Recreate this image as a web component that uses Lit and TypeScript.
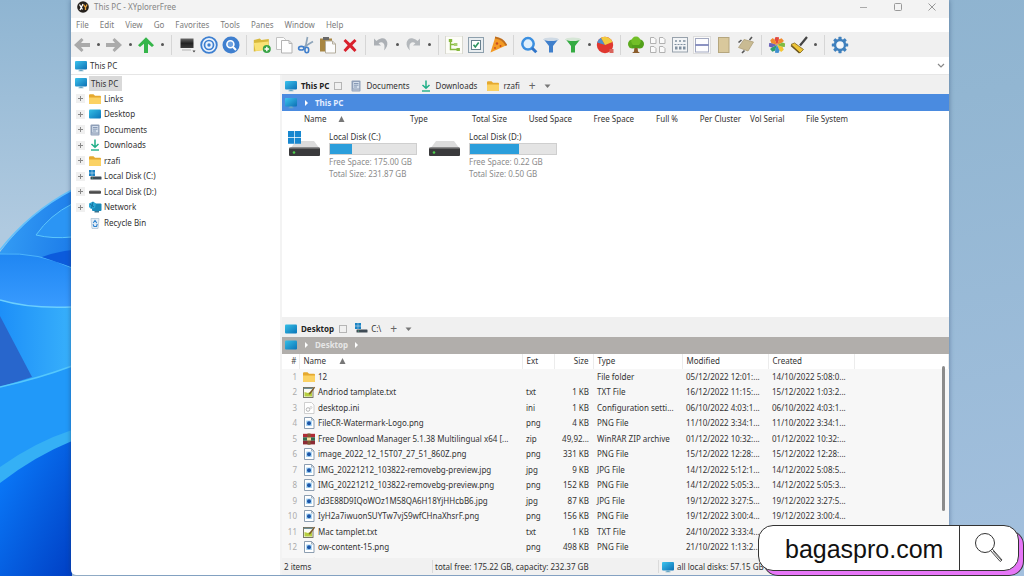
import { LitElement, html, svg, css } from "lit";
import { customElement } from "lit/decorators.js";

const icon = (body: unknown, w = 18, h = 18, vb = `0 0 ${w} ${h}`) =>
  html`<svg width=${w} height=${h} viewBox=${vb} aria-hidden="true">${body}</svg>`;

/* small file-system glyphs, 14 x 12 */
const small = {
  monitor: svg`<defs><linearGradient id="m" x1="0" y1="0" x2="1" y2="1"><stop offset="0" stop-color="#3cc4ee"/><stop offset="1" stop-color="#0c6fb4"/></linearGradient></defs><rect x="1" y="1" width="12" height="8.5" rx="1" fill="url(#m)"/><path d="M5.500 9.500h3v1h1v.8H4.500v-.8h1z" fill="#6aa6c4"/>`,
  desktop: svg`<defs><linearGradient id="d" x1="0" y1="0" x2="1" y2="1"><stop offset="0" stop-color="#35bfe6"/><stop offset="1" stop-color="#0b74b8"/></linearGradient></defs><rect x="1" y="1.500" width="12" height="9" rx="1" fill="url(#d)"/>`,
  folder: svg`<path d="M1 2.200q0-1 1-1h3.500l1.500 1.500h5q1 0 1 1V10q0 1-1 1H2q-1 0-1-1z" fill="#e5a92f"/><path d="M1 4.500h12V10q0 1-1 1H2q-1 0-1-1z" fill="#fbd264"/>`,
  docs: svg`<rect x="2.500" y=".5" width="9" height="11" rx="1" fill="#8f9fb8"/><rect x="4.200" y="2" width="6" height="6.500" fill="#d5dfec"/><path d="M5 3.500h4.500M5 5.200h4.500M5 7h3" stroke="#7388a8" stroke-width=".8"/><path d="M3.500 10h7" stroke="#c5cedd"/>`,
  down: svg`<path d="M7 .5v7M3.500 5L7 8.300 10.500 5" fill="none" stroke="#1fae87" stroke-width="1.500"/><path d="M3 11h8" stroke="#1fae87" stroke-width="1.400"/>`,
  diskC: svg`<path d="M1 0h2.800v2.800H1zM4.200 0H7v2.800H4.200zM1 3.200h2.800V6H1zM4.200 3.200H7V6H4.200z" fill="#1b83c4"/><rect x="2.500" y="6.500" width="11" height="3" rx=".6" fill="#3f4b55"/><circle cx="4.500" cy="8" r=".6" fill="#4dc08a"/>`,
  diskD: svg`<rect x="1" y="4.800" width="12" height="3" rx=".8" fill="#4a4a4a"/><path d="M2 4.800h10" stroke="#aaa" stroke-width=".7"/>`,
  network: svg`<rect x="4" y="2.500" width="9.500" height="7.500" rx="1" fill="#1889b8"/><path d="M1 2.500L5 .5l3 2-1 4.500-4 1-2-2z" fill="#2aa7d4"/><path d="M2 3l4 3M5 1L3.500 7" stroke="#0c5f8b" stroke-width=".7"/><path d="M6.500 10h4.500v1.500H6.500z" fill="#3a7590"/>`,
  bin: svg`<path d="M3 1.500h8l-1 10H4z" fill="#e3edf5" stroke="#b4c6d5" stroke-width=".8"/><path d="M5.200 6L7 3.500 8.800 6M5 7.200L6 9.500h2.500L9.300 7" fill="none" stroke="#2f83cf" stroke-width="1.100"/>`,
  txt: svg`<rect x="1.500" y="1.500" width="9.500" height="10" fill="#fbfbf3" stroke="#6b6b5a" stroke-width=".9"/><path d="M2.500 6l3.500 1 4-2v5.500h-7.500z" fill="#b6cf3f"/><path d="M6.500 8L12 .8l1.200.8L8 8.500z" fill="#7b5a2b"/><path d="M2 2.500h8.500" stroke="#6e8d96" stroke-width="1"/>`,
  ini: svg`<path d="M2.500.5h7l2.500 2.500v8.500H2.500z" fill="#fff" stroke="#c4c4c4" stroke-width=".8"/><circle cx="6" cy="7.500" r="1.800" fill="none" stroke="#b5b5b5"/><circle cx="9" cy="5.500" r="1" fill="none" stroke="#c5c5c5" stroke-width=".8"/>`,
  png: svg`<path d="M2.500.5h7l2.500 2.500v8.500H2.500z" fill="#fff" stroke="#7f93a8" stroke-width=".9"/><rect x="4.200" y="3.600" width="5.600" height="5.400" fill="#9fd0f2"/><circle cx="7" cy="6.200" r="2" fill="#1c55a8"/><path d="M9.500.5v2.500H12" fill="none" stroke="#7f93a8" stroke-width=".7"/>`,
  zip: svg`<rect x="1" y=".8" width="12" height="3.500" fill="#b02a35"/><rect x="1" y="4.300" width="12" height="3.500" fill="#336a4c"/><rect x="1" y="7.800" width="12" height="3.600" fill="#8c2b34"/><rect x="5.500" y=".5" width="3" height="11.200" fill="#7e5a33"/><rect x="5" y="4.500" width="4" height="3" fill="#f0dca0"/>`,
};
const sm = (k: keyof typeof small) => icon(small[k], 14, 12);

/* tool bar glyphs, 18 x 18 */
const gearTeeth = [0, 45, 90, 135, 180, 225, 270, 315].map(
  (a) => svg`<rect x="7.400" y=".8" width="3.200" height="3.500" rx=".6" fill="#3f80bd" transform="rotate(${a} 9 9)"/>`
);
const petals = ["#e2483d", "#f08a2c", "#7dbb42", "#f3c534", "#3f8fd0", "#2f9e6d", "#6a62b8", "#f08a2c"].map(
  (c, i) => svg`<path d="M9 9L6.500 3.500 7.500.9 11 1.200 10.800 4.500z" fill=${c} transform="rotate(${i * 45} 9 9)"/>`
);
const tools: Record<string, unknown> = {
  Back: svg`<path d="M1 9l7.500-7 2 2L8 7h9v4H8l2.500 3-2 2z" fill="#a9a9a9"/>`,
  Forward: svg`<path d="M17 9L9.500 2l-2 2L10 7H1v4h9l-2.500 3 2 2z" fill="#ababab"/>`,
  Up: svg`<path d="M9 1.200l8 8-2 1.800-4-3.300V17H7V7.700L3 11 1 9.200z" fill="#35b54a"/>`,
  Computer: svg`<defs><linearGradient id="k" x1="0" y1="0" x2="0" y2="1"><stop offset="0" stop-color="#6a6a6a"/><stop offset=".5" stop-color="#222"/><stop offset="1" stop-color="#3c3c3c"/></linearGradient></defs><rect x="2.500" y="2.500" width="13" height="9.500" fill="url(#k)"/><path d="M4 14h9" stroke="#c9c9c9" stroke-width="1.500"/><path d="M14.500 14.500h3l-1.500 2z" fill="#444"/>`,
  Target: svg`<circle cx="9" cy="9" r="7.800" fill="#eaf2fc" stroke="#3d7fd0" stroke-width="1.800"/><circle cx="9" cy="9" r="4.500" fill="none" stroke="#3d7fd0" stroke-width="1.700"/><circle cx="9" cy="9" r="1.700" fill="#3d7fd0"/>`,
  Locate: svg`<circle cx="9" cy="9" r="8.500" fill="#3f7fcf"/><circle cx="8.400" cy="8.200" r="3.500" fill="#6ea2e2" stroke="#fff" stroke-width="1.600"/><path d="M11 11l3 3" stroke="#fff" stroke-width="2"/>`,
  "New folder": svg`<path d="M.8 4l6-1.500 1.500 1.500 7.500-1v10l-15 2.500z" fill="#d8b93c"/><path d="M.8 7L15.500 5.500v8L2.500 15z" fill="#f9e275"/><circle cx="13.800" cy="13" r="4" fill="#38a345"/><path d="M13.800 10.700v4.600M11.500 13h4.600" stroke="#fff" stroke-width="1.400"/>`,
  Copy: svg`<path d="M1.500 1.500h7l2 2v10h-9z" fill="#fdfdfd" stroke="#c2c2c2"/><path d="M6.500 4.500h7.500l3 3v9.500H6.500z" fill="#fdfdfd" stroke="#b2b2b2"/><path d="M14 4.500v3h3" fill="none" stroke="#b2b2b2"/>`,
  Cut: svg`<path d="M10.500 1L8.500 11M16 5.500L6 11.500" stroke="#8fa5ba" stroke-width="1.700"/><ellipse cx="4.300" cy="12.200" rx="2.700" ry="1.800" fill="none" stroke="#3f7ecb" stroke-width="1.600"/><ellipse cx="9.800" cy="14" rx="1.900" ry="2.700" fill="none" stroke="#3f7ecb" stroke-width="1.600"/>`,
  Paste: svg`<rect x="1" y="2.500" width="12" height="13" fill="#a88642"/><rect x="4" y="1" width="6" height="3" fill="#686868"/><path d="M6.500 5h7l3 3v9h-10z" fill="#fcfcfc" stroke="#b3ac9c"/><path d="M13.500 5v3h3" fill="none" stroke="#b3ac9c"/>`,
  Delete: svg`<path d="M4.500 3L9 7.200 13.500 3 15.500 5 11.300 9.300l4.200 4.700-2 2L9 11.600 4.500 16l-2-2 4.200-4.700L2.500 5z" fill="#d9202c"/>`,
  Undo: svg`<path d="M2 2.500v7h7L6.600 7.200C10 4.500 14 7 12 14.500 18 9.500 15.500 1 9 2.500 7 3 5.500 4 4.500 5z" fill="#acb0b5"/>`,
  Redo: svg`<path d="M16 2.500v7H9l2.400-2.300C8 4.500 4 7 6 14.500 0 9.500 2.500 1 9 2.500c2 .5 3.500 1.500 4.500 2.500z" fill="#b4b8bc"/>`,
  "Show tree": svg`<rect x=".5" y="0" width="17" height="18" fill="#fdfdf8" stroke="#d9d9d0"/><path d="M5.500 4v9.500H13M5.500 8.500h4" fill="none" stroke="#86b93e" stroke-width="1.400"/><rect x="3.800" y="3" width="3.400" height="3" fill="#86b93e"/><rect x="9" y="7" width="3.400" height="3" fill="#a9cf70"/><rect x="11.500" y="12" width="3.400" height="3" fill="#86b93e"/>`,
  Checkboxes: svg`<rect x="1.500" y="1.500" width="15" height="15" fill="#e8edf0" stroke="#8ea0ad"/><rect x="4.500" y="4.500" width="9" height="9" fill="#fff" stroke="#68808f"/><path d="M6.500 8.800L8.300 11l3.400-4.500" fill="none" stroke="#2c9360" stroke-width="1.600"/>`,
  Pizza: svg`<path d="M1.500 16.500L6 2q7.500 1 11 7.500z" fill="#f39a24"/><path d="M6 1.500q8 1 11.500 8" fill="none" stroke="#bf6d1c" stroke-width="1.800"/><circle cx="8" cy="7.500" r="1.200" fill="#c84b20"/><circle cx="11.500" cy="10" r="1" fill="#c84b20"/><circle cx="6" cy="12" r=".9" fill="#c84b20"/>`,
  Find: svg`<circle cx="8" cy="7.800" r="5.700" fill="#dff0fd" stroke="#3b8fe0" stroke-width="2.500"/><path d="M12 12l4.300 4.300" stroke="#2f74c9" stroke-width="3"/>`,
  "Filter blue": svg`<path d="M1.500 3h15l-5.500 7v6.500h-4V10z" fill="#3f7fcb"/><ellipse cx="9" cy="3.300" rx="7.500" ry="1.800" fill="#cfdae5"/>`,
  "Filter green": svg`<path d="M1.500 3h15l-5.500 7v6.500h-4V10z" fill="#34ab42"/><ellipse cx="9" cy="3.300" rx="7.500" ry="1.800" fill="#d6e6d6"/>`,
  Statistics: svg`<circle cx="9" cy="9" r="8.200" fill="#e0372f"/><path d="M9 9L1.200 6.500A8.200 8.200 0 0 1 5 1.800z" fill="#4e8fce"/><path d="M9 9L5 1.800A8.200 8.200 0 0 1 16.500 6z" fill="#f2cb3f"/><path d="M13.500 13h4v4h-4z" fill="#d9635b"/>`,
  Tree: svg`<path d="M7.600 9h2.800l.6 6.500 2 1.500H5l2-1.500z" fill="#8b5d2c"/><circle cx="5.500" cy="8" r="4.500" fill="#5cab1e"/><circle cx="12.500" cy="8" r="4.500" fill="#52a01a"/><circle cx="9" cy="5.200" r="4.700" fill="#72bf28"/><path d="M5 9h8v3H5z" fill="#529e1b"/>`,
  Tiles: svg`<path d="M1.500 1.500H5L7 3.500V7.500H1.500zM10.500 1.500H14l2 2v4h-5.500zM1.500 10.500H5l2 2v4H1.500zM10.500 10.500H14l2 2v4h-5.500z" fill="#fafafa" stroke="#b1b1b1"/>`,
  Details: svg`<rect x="1.500" y="1.500" width="15" height="14.500" fill="#f2f4f6" stroke="#98a2ac"/><path d="M4 5h2M8 5h2M12 5h2.500" stroke="#8090a0" stroke-width="1.500"/><path d="M3.500 8.500h11" stroke="#8090a0" stroke-dasharray="2 1"/><path d="M4 10.500h2.500v3H4zM8 10.500h2.500v3H8zM12 10.500h2.500v3H12z" fill="#8090a0"/>`,
  "Dual pane": svg`<rect x=".5" y=".5" width="17" height="17" fill="#fafafa" stroke="#dcdcdc"/><rect x="2.500" y="2.500" width="13" height="13.500" fill="#fdfdff" stroke="#a3a9c0"/><path d="M2.500 9h13" stroke="#5a64a8" stroke-width="1.400"/>`,
  Preview: svg`<rect x="3.500" y="1.500" width="10.500" height="15" fill="#d9c89c" stroke="#b5a67e"/>`,
  Rotate: svg`<path d="M7 3.500L16.500 6l-5.500 9L1.500 11.500z" fill="#c9bb93" stroke="#aea079" stroke-width=".8"/><path d="M1.500 6.500L4.500 4M12.500 4L15 1M5 17L7.500 14.500" stroke="#555" stroke-width="1.600"/>`,
  Colors: petals,
  Brush: svg`<path d="M17 1l-7 8.500" stroke="#444" stroke-width="2.200"/><path d="M1 8.500l3.500-1.500 9 6.500-3.500 3.500z" fill="#eec435" stroke="#8a7028" stroke-width=".9"/><path d="M1 9.500l8.500 7.500" stroke="#6b541a" stroke-width="1.300"/>`,
  Settings: svg`${gearTeeth}<circle cx="9" cy="9" r="5" fill="#f3f7fb" stroke="#3f80bd" stroke-width="2.400"/>`,
};
const toolbar = [
  "Back", ".", "Forward", ".", "Up", ".", "|", "Computer", "Target", "Locate", "|",
  "New folder", "Copy", "Cut", "Paste", "Delete", "|", "Undo", ".", "Redo", ".", "|",
  "Show tree", "Checkboxes", "Pizza", "|", "Find", "Filter blue", "Filter green", ".", "Statistics", "|",
  "Tree", "Tiles", "Details", "Dual pane", "Preview", "Rotate", "|", "Colors", "Brush", ".", "|", "Settings",
];

const driveArt = (win: boolean) => html`<svg width="34" height="28" viewBox="0 0 34 28" aria-hidden="true">
  <path d="M8 11h18l6 8H2z" fill="#dcdcdc"/><rect x="1" y="17.500" width="31" height="8.500" rx="1" fill="#3a3a3c"/>
  <path d="M1 18.500h31" stroke="#666"/><circle cx="6" cy="22.500" r="1.300" fill="#4fd04f"/>
  ${win ? svg`<path d="M0 1h6.300v6H0zM7 1h6v6H7zM0 7.700h6.300v6H0zM7 7.700h6v6H7z" fill="#1787cf"/>` : ""}
</svg>`;

type Kind = keyof typeof small;
const folders: [Kind, string][] = [
  ["folder", "Links"], ["desktop", "Desktop"], ["docs", "Documents"], ["down", "Downloads"], ["folder", "rzafi"],
  ["diskC", "Local Disk (C:)"], ["diskD", "Local Disk (D:)"], ["network", "Network"], ["bin", "Recycle Bin"],
];
const files: [Kind, string, string, string, string, string, string][] = [
  ["folder", "12", "", "", "File folder", "05/12/2022 12:01:...", "14/10/2022 5:08:0..."],
  ["txt", "Andriod tamplate.txt", "txt", "1 KB", "TXT File", "16/12/2022 11:15:...", "15/12/2022 1:03:2..."],
  ["ini", "desktop.ini", "ini", "1 KB", "Configuration setti...", "06/10/2022 4:03:1...", "06/10/2022 4:03:1..."],
  ["png", "FileCR-Watermark-Logo.png", "png", "4 KB", "PNG File", "11/10/2022 3:34:1...", "11/10/2022 3:34:1..."],
  ["zip", "Free Download Manager 5.1.38 Multilingual x64 [...", "zip", "49,92...", "WinRAR ZIP archive", "01/12/2022 10:32:...", "01/12/2022 10:32:..."],
  ["png", "image_2022_12_15T07_27_51_860Z.png", "png", "331 KB", "PNG File", "15/12/2022 12:28:...", "15/12/2022 12:28:..."],
  ["png", "IMG_20221212_103822-removebg-preview.jpg", "jpg", "9 KB", "JPG File", "14/12/2022 5:12:1...", "14/12/2022 5:08:5..."],
  ["png", "IMG_20221212_103822-removebg-preview.png", "png", "152 KB", "PNG File", "14/12/2022 5:05:3...", "14/12/2022 5:05:3..."],
  ["png", "Jd3E88D9IQoWOz1M58QA6H18YjHHcbB6.jpg", "jpg", "87 KB", "JPG File", "19/12/2022 3:27:5...", "19/12/2022 3:27:5..."],
  ["png", "IyH2a7iwuonSUYTw7vjS9wfCHnaXhsrF.png", "png", "156 KB", "PNG File", "19/12/2022 3:00:4...", "19/12/2022 3:00:4..."],
  ["txt", "Mac tamplet.txt", "txt", "1 KB", "TXT File", "24/10/2022 3:33:4...", "24/10/2022 3:33:4..."],
  ["png", "ow-content-15.png", "png", "498 KB", "PNG File", "21/10/2022 1:13:2...", "21/10/2022 1:13:2..."],
];

@customElement("app-root")
export class AppRoot extends LitElement {
  static styles = css`
    :host {
      display: block; position: relative; height: 100vh; overflow: hidden;
      background: linear-gradient(170deg, #8ab0cd 0%, #92b6d2 35%, #a3c0de 100%);
      font: 8px/12px "Noto Sans", "Open Sans", sans-serif; color: #333;
    }
    * { box-sizing: border-box; }
    svg { display: block; flex: none; }
    button { font: inherit; color: inherit; background: none; border: 0; padding: 0; margin: 0; display: flex; align-items: center; white-space: nowrap; }
    .paper { position: absolute; left: 0; top: 0; height: 100%; }
    .window {
      position: relative; display: flex; flex-direction: column; height: calc(100% - 1px);
      margin: 0 75px 0 71px; background: #fff; border-radius: 0 0 5px 5px; overflow: hidden;
      box-shadow: 0 0 5px rgba(30, 60, 100, .5);
    }
    .title { display: flex; align-items: center; height: 18px; padding: 0 12px 5px 6px; background: #f3f3f3; color: #858585; }
    .title h1 { font: inherit; margin: 0 auto 0 5px; }
    .title .controls { display: flex; gap: 24px; }
    .menu { display: flex; align-items: center; gap: 11px; height: 14px; padding-left: 5px; color: #7c7c7c; }
    .tools { display: flex; align-items: center; height: 25px; background: #f0f0f0; }
    .tool { width: 22px; height: 22px; justify-content: center; }
    .more { width: 10px; height: 22px; justify-content: center; }
    .more::before { content: ""; width: 3px; height: 3px; border-radius: 2px; background: #555; }
    .sep { width: 9px; height: 20px; display: flex; justify-content: center; }
    .sep::before { content: ""; width: 1px; background: #d6d6d6; }
    .address { display: flex; align-items: center; gap: 2px; height: 18px; padding: 0 4px 0 3px; border-bottom: 1px solid #e6e6e6; }
    .address span { margin-right: auto; }
    .body { flex: 1; min-height: 0; display: grid; grid-template-columns: 209px 2px minmax(0, 1fr); }
    .split { background: #f3f3f3; }
    .tree, .tree ul { list-style: none; margin: 0; padding: 0; }
    .tree { padding-left: 3px; }
    .root { display: flex; align-items: center; height: 16px; }
    .root span { background: #d9d9d9; padding: 0 4px 0 2px; line-height: 15px; margin-left: 1px; }
    .branch { display: flex; align-items: center; height: 15px; gap: 2px; padding-left: 2px; }
    .branch:nth-child(even) { height: 16px; }
    .branch .twist { width: 9px; height: 9px; justify-content: center; margin-right: 1px; background: #f0f0f0; }
    .branch .none { background: none; }
    .right { display: grid; grid-template-rows: minmax(0, 1fr) minmax(0, 1fr) 17px; min-height: 0; }
    .pane { display: flex; flex-direction: column; min-height: 0; overflow: hidden; }
    .tabs { display: flex; align-items: center; height: 19px; padding: 3px 0 0 2px; background: #f0f0f0; flex: none; }
    .lower .tabs { height: 20px; padding-top: 4px; }
    .tab { gap: 3px; margin-right: 9px; }
    .tab.on { font-weight: 700; color: #222; margin-right: 7px; }
    .box { width: 8px; height: 8px; border: 1px solid #b5b5b5; margin-left: 2px; }
    .plus { margin-right: 8px; color: #666; font-size: 12px; }
    .path { display: flex; align-items: center; gap: 6px; height: 17px; padding-left: 2px; background: #4a8be0; color: #e4eeff; font-weight: 700; flex: none; }
    .path.off { background: #b1aeab; color: #e6e6e6; }
    .heads { display: grid; grid-template-columns: 17px 106px 102px 65px 62px 44px 63px 60px 1fr; height: 15px; align-items: center; flex: none; }
    .heads button { padding-left: 5px; height: 14px; }
    .heads .num { justify-content: flex-end; padding: 0; }
    .heads .serial { padding-left: 9px; }
    .type-size { display: flex; justify-content: space-between; }
    .sort { margin-left: 11px; }
    .drives { display: flex; padding: 4px 0 0 6px; }
    .drive { display: flex; gap: 7px; width: 140px; }
    .drive dl { margin: 0; }
    .drive dt { line-height: 13px; }
    .drive dd { margin: 0; color: #8b8b8b; white-space: nowrap; line-height: 12px; }
    .drive .meter { height: 12px; width: 88px; background: #e4e4e4; border: 1px solid #cfcfcf; margin-bottom: 1px; }
    .fill { height: 100%; background: #2b9edb; }
    .list { position: relative; flex: 1; min-height: 0; overflow: hidden; background: #f7f7f7; }
    table { width: 100%; table-layout: fixed; border-collapse: collapse; }
    th, td { padding: 0 0 0 4px; text-align: left; font-weight: 400; white-space: nowrap; height: 15px; line-height: 12px; }
    th { background: #fff; border-right: 1px solid #ececec; }
    tbody tr:nth-child(odd) td { height: 16px; }
    .c-num { width: 17px; } .c-name { width: 223px; } .c-ext { width: 32px; } .c-size { width: 39px; }
    .c-type { width: 89px; } .c-date { width: 86px; }
    td.n, th.n { text-align: right; padding: 0 2px 0 0; color: #ababab; }
    th.n { color: #444; }
    td.s, th.s { text-align: right; padding: 0 4px 0 0; }
    .cell { display: flex; align-items: center; gap: 2px; }
    td .cell { margin-left: -1px; }
    .thumb { position: absolute; right: 4px; top: 12px; width: 3px; bottom: 47px; border-radius: 2px; background: #8b8b8b; }
    .status { display: grid; grid-template-columns: 150px 1fr 291px; align-items: center; background: #f1f1f1; }
    .status div { display: flex; align-items: center; gap: 2px; padding-left: 2px; height: 13px; border-left: 1px solid #dadada; white-space: nowrap; }
    .status div:first-child { border: 0; }
    .search {
      position: absolute; right: 5px; bottom: 5px; width: 261px; height: 46px; display: flex;
      background: #fff; border: 1px solid #333; border-radius: 15px; box-shadow: 5px 5px 0 -1px #e676f7, 5px 5px 0 0 #333;
    }
    .search input { flex: 1; min-width: 0; border: 0; outline: 0; background: none; padding: 2px 0 0 26px; font: 25px/30px "Liberation Sans", Arial, sans-serif; color: #111; }
    .search button { width: 59px; justify-content: center; border-left: 1px solid #333; }
  `;

  private tri = icon(svg`<path d="M3.500 1L6.500 7h-6z" fill="#777"/>`, 7, 8);
  private arrow = (c: string) => icon(svg`<path d="M1 1l3 3-3 3z" fill=${c}/>`, 5, 8);
  private drop = icon(svg`<path d="M.5 2.500h6L3.500 6z" fill="#777"/>`, 7, 8);

  private tool(name: string) {
    if (name === "|") return html`<span class="sep"></span>`;
    if (name === ".") return html`<button class="more" aria-label="More"></button>`;
    return html`<button class="tool" aria-label=${name}>${icon(tools[name])}</button>`;
  }

  private drive(name: string, used: number, free: string, total: string, win = false) {
    return html`<div class="drive">${driveArt(win)}
      <dl><dt>${name}</dt>
        <dd class="meter"><div class="fill" style="width:${used}%"></div></dd>
        <dd>Free Space: ${free}</dd><dd>Total Size: ${total}</dd></dl></div>`;
  }

  render() {
    return html`
      <svg class="paper" viewBox="0 0 100 576" aria-hidden="true">
        <defs>
          <linearGradient id="sky" x1="0" y1="0" x2="0" y2="1"><stop offset="0" stop-color="#8fb5d2"/><stop offset=".4" stop-color="#b0cae0"/></linearGradient>
          <linearGradient id="p1" x1="0" y1="0" x2="1" y2="1"><stop offset="0" stop-color="#36a0f6"/><stop offset="1" stop-color="#0a62e0"/></linearGradient>
          <linearGradient id="p2" x1="0" y1="0" x2="0" y2="1"><stop offset="0" stop-color="#1f86f2"/><stop offset="1" stop-color="#3a9cff"/></linearGradient>
          <linearGradient id="p3" x1="0" y1="0" x2="1" y2="0"><stop offset="0" stop-color="#1d8ff8"/><stop offset="1" stop-color="#38b0fb"/></linearGradient>
          <linearGradient id="p4" x1="0" y1="0" x2="1" y2="1"><stop offset="0" stop-color="#0b80ff"/><stop offset="1" stop-color="#003fc4"/></linearGradient>
        </defs>
        <rect width="100" height="576" fill="url(#sky)"/>
        <path d="M0 252Q30 212 72 190V576H0z" fill="url(#p1)"/>
        <path d="M0 250Q30 212 72 190" fill="none" stroke="#62c0fb" stroke-width="1.500"/>
        <path d="M36 235Q50 215 72 204V237Q52 239 36 235z" fill="#2b95f4" stroke="#5cc6fc"/>
        <path d="M0 254Q40 252 72 268V310H0z" fill="url(#p2)"/>
        <path d="M0 254Q40 252 72 268" fill="none" stroke="#4cb4fb"/>
        <path d="M42 257Q55 252 72 250V267Q56 262 42 257z" fill="#0c5bdc"/>
        <path d="M0 300Q30 309 72 307V576H0z" fill="url(#p3)"/>
        <path d="M0 300Q30 309 72 307" fill="none" stroke="#6ccffd" stroke-width="1.500"/>
        <path d="M0 316L32 377 0 387z" fill="#2866cc"/>
        <path d="M0 387Q40 378 72 366V440Q30 450 0 478z" fill="#2199f9"/>
        <path d="M0 387Q40 378 72 366" fill="none" stroke="#55c8fc" stroke-width="1.500"/>
        <path d="M0 467Q35 442 72 430V445Q35 458 0 484z" fill="#35b0f5"/>
        <path d="M0 483Q35 456 72 441V576H0z" fill="url(#p4)"/>
      </svg>

      <main class="window">
        <header class="title">
          ${icon(svg`<circle cx="6" cy="6" r="5.800" fill="#25201c"/><path d="M2.500 3.500l3 5M6 3L3 9" stroke="#fff" stroke-width="1.300"/><path d="M6.500 3.500l2 3 1.500-3M8.500 6v3" fill="none" stroke="#e8a33c" stroke-width="1.300"/>`, 12, 12)}
          <h1>This PC - XYplorerFree</h1>
          <div class="controls">
            <button aria-label="Minimize">${icon(svg`<path d="M1 5.500h7" stroke="#aaa"/>`, 10, 10)}</button>
            <button aria-label="Maximize">${icon(svg`<rect x="1.500" y="1.500" width="7" height="7" rx="1" fill="none" stroke="#999"/>`, 10, 10)}</button>
            <button aria-label="Close">${icon(svg`<path d="M1.500 1.500l7 7M8.500 1.500l-7 7" stroke="#999"/>`, 10, 10)}</button>
          </div>
        </header>
        <nav class="menu">
          ${["File", "Edit", "View", "Go", "Favorites", "Tools", "Panes", "Window", "Help"].map((m) => html`<button>${m}</button>`)}
        </nav>
        <div class="tools">${toolbar.map((t) => this.tool(t))}</div>
        <div class="address">${sm("monitor")}<span>This PC</span>
          <button aria-label="Open path list">${icon(svg`<path d="M1 2l3 3 3-3" fill="none" stroke="#888" stroke-width="1.200"/>`, 8, 8)}</button>
        </div>

        <div class="body">
          <ul class="tree">
            <li><div class="root">${sm("monitor")}<span>This PC</span></div>
              <ul>${folders.map(([k, n]) => html`<li class="branch">
                ${k === "bin" ? html`<span class="twist none"></span>` : html`<button class="twist" aria-label="Expand ${n}">${icon(svg`<path d="M2.500 0v5M0 2.500h5" stroke="#888"/>`, 5, 5)}</button>`}
                ${sm(k)}<span>${n}</span></li>`)}</ul>
            </li>
          </ul>
          <div class="split"></div>
          <div class="right">
            <section class="pane">
              <div class="tabs">
                <button class="tab on">${sm("monitor")}This PC<span class="box"></span></button>
                <button class="tab">${sm("docs")}Documents</button>
                <button class="tab">${sm("down")}Downloads</button>
                <button class="tab">${sm("folder")}rzafi</button>
                <button class="plus" aria-label="New tab">+</button><button aria-label="Tab list">${this.drop}</button>
              </div>
              <div class="path">${sm("monitor")}${this.arrow("#fff")}<span>This PC</span></div>
              <div class="heads"><span></span>
                <button>Name<span class="sort">${this.tri}</span></button>
                <div class="type-size"><button>Type</button><button class="num">Total Size</button></div>
                <button class="num">Used Space</button>
                <button class="num">Free Space</button>
                <button class="num">Full %</button>
                <button class="num">Per Cluster</button>
                <button class="serial">Vol Serial</button>
                <button>File System</button>
              </div>
              <div class="drives">
                ${this.drive("Local Disk (C:)", 25, "175.00 GB", "231.87 GB", true)}
                ${this.drive("Local Disk (D:)", 57, "0.22 GB", "0.50 GB")}
              </div>
            </section>

            <section class="pane lower">
              <div class="tabs">
                <button class="tab on">${sm("desktop")}Desktop<span class="box"></span></button>
                <button class="tab">${sm("diskC")}C:\\</button>
                <button class="plus" aria-label="New tab">+</button><button aria-label="Tab list">${this.drop}</button>
              </div>
              <div class="path off">${sm("desktop")}${this.arrow("#fff")}<span>Desktop</span>${this.arrow("#fff")}</div>
              <div class="list">
                <table>
                  <colgroup><col class="c-num"><col class="c-name"><col class="c-ext"><col class="c-size"><col class="c-type"><col class="c-date"><col class="c-date"><col></colgroup>
                  <thead><tr><th class="n">#</th><th><div class="cell">Name<span class="sort">${this.tri}</span></div></th><th>Ext</th><th class="s">Size</th><th>Type</th><th>Modified</th><th>Created</th><th></th></tr></thead>
                  <tbody>
                    ${files.map(([k, n, e, s, t, m, c], i) => html`<tr><td class="n">${i + 1}</td><td><div class="cell">${sm(k)}${n}</div></td><td>${e}</td><td class="s">${s}</td><td>${t}</td><td>${m}</td><td>${c}</td><td></td></tr>`)}
                    <tr><td></td><td><div class="cell">${sm("txt")}</div></td><td colspan="6"></td></tr>
                  </tbody>
                </table>
                <div class="thumb"></div>
              </div>
            </section>
            <footer class="status">
              <div>2 items</div><div>total free: 175.22 GB, capacity: 232.37 GB</div><div>${sm("monitor")}all local disks: 57.15 GB</div>
            </footer>
          </div>
        </div>
      </main>

      <form class="search" role="search">
        <input type="text" aria-label="Site address" value="bagaspro.com">
        <button type="button" aria-label="Search">
          ${icon(svg`<circle cx="11" cy="11" r="9.500" fill="#fff" stroke="#333" stroke-width="1"/><path d="M16.500 18.500l1.800-1.500 9.700 11-1.800 1.500z" fill="#fff" stroke="#333" stroke-width=".9"/><path d="M19 19l8 9" stroke="#333" stroke-width=".7"/>`, 30, 32)}
        </button>
      </form>`;
  }
}
